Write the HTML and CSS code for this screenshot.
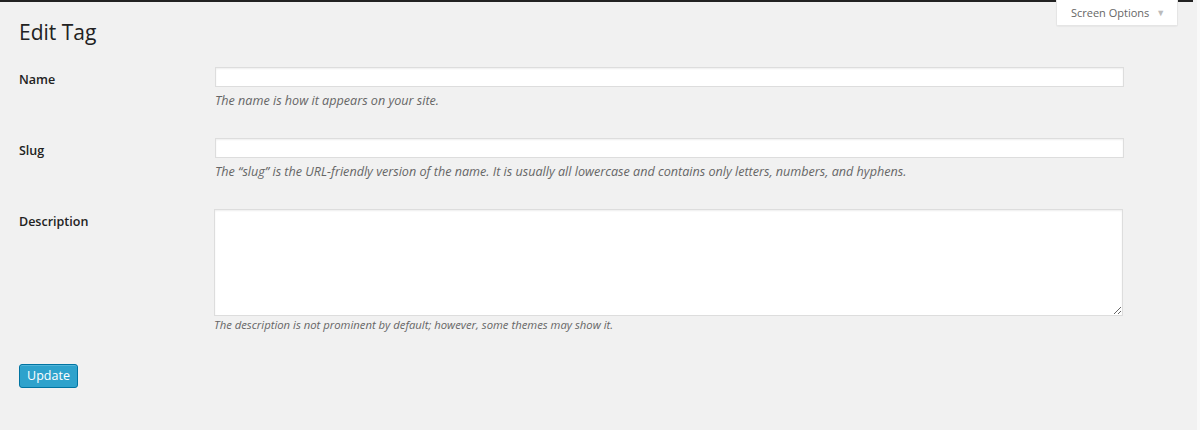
FILE: index.html
```html
<!DOCTYPE html>
<html lang="en">
<head>
<meta charset="utf-8">
<title>Edit Tag</title>
<link rel="stylesheet" href="styles.css">
</head>
<body>
<div class="topbar"></div>
<div class="screen-options">Screen Options <span class="arrow">▼</span></div>
<div class="wrap">
  <h1 class="title">Edit Tag</h1>
  <form class="form">
    <div class="row">
      <label class="label" for="name">Name</label>
      <div class="field">
        <input class="input" id="name" type="text">
        <p class="desc">The name is how it appears on your site.</p>
      </div>
    </div>
    <div class="row">
      <label class="label" for="slug">Slug</label>
      <div class="field">
        <input class="input" id="slug" type="text">
        <p class="desc">The “slug” is the URL-friendly version of the name. It is usually all lowercase and contains only letters, numbers, and hyphens.</p>
      </div>
    </div>
    <div class="row">
      <label class="label" for="description">Description</label>
      <div class="field">
        <textarea class="textarea" id="description"></textarea>
        <p class="desc desc-small">The description is not prominent by default; however, some themes may show it.</p>
      </div>
    </div>
    <div class="actions">
      <button class="button" type="button">Update</button>
    </div>
  </form>
</div>
</body>
</html>
```
FILE: styles.css
```css
html, body {
  margin: 0;
  padding: 0;
}
body {
  background: #f1f1f1;
  font-family: "Open Sans", "Liberation Sans", sans-serif;
  color: #222;
  height: 430px;
  overflow: hidden;
  position: relative;
  border-right: 3px solid #f9f9f9;
  box-sizing: border-box;
}
.topbar {
  height: 2px;
  background: #222;
  margin-right: 4px;
}
.screen-options {
  position: absolute;
  top: 0;
  right: 19px;
  width: 122px;
  height: 26px;
  box-sizing: border-box;
  padding-left: 2px;
  background: #fff;
  border: 1px solid #e5e5e5;
  border-top: none;
  border-radius: 0 0 2px 2px;
  font-size: 11px;
  line-height: 25px;
  color: #666;
  text-align: center;
  box-shadow: 0 1px 1px rgba(0,0,0,0.04);
}
.screen-options .arrow {
  font-size: 9px;
  color: #bbb;
  vertical-align: 1px;
  margin-left: 4px;
}
.wrap {
  padding: 0 0 0 19px;
}
.title {
  margin: 16px 0 0 0;
  font-size: 21px;
  font-weight: 400;
  line-height: 29px;
  color: #222;
}
.form {
  margin-top: 5px;
}
.row {
  display: grid;
  grid-template-columns: 196px 909px;
  padding: 15px 0;
}
.label {
  font-size: 12.5px;
  font-weight: 600;
  line-height: 20px;
  padding-top: 3px;
  color: #222;
}
.field {
  display: flex;
  flex-direction: column;
}
.input {
  display: block;
  width: 909px;
  height: 20px;
  box-sizing: border-box;
  margin: 0;
  padding: 0 4px;
  border: 1px solid #ddd;
  background: #fff;
  box-shadow: inset 0 1px 2px rgba(0,0,0,0.07);
  font-family: inherit;
  font-size: 13px;
}
.textarea {
  display: block;
  width: 909px;
  height: 107px;
  box-sizing: border-box;
  margin: 0 0 0 -1px;
  padding: 2px 4px;
  border: 1px solid #ddd;
  background: #fff;
  box-shadow: inset 0 1px 2px rgba(0,0,0,0.07);
  font-family: inherit;
  font-size: 13px;
}
.desc {
  margin: 4px 0 -3px 0;
  font-size: 12.6px;
  font-style: italic;
  line-height: 20px;
  color: #666;
}
.desc-small {
  font-size: 11.3px;
  margin: -1px 0 2px -1px;
}
.actions {
  padding-top: 12px;
}
.button {
  display: block;
  width: 59px;
  height: 24px;
  box-sizing: border-box;
  padding: 0;
  background: #2ea2cc;
  border: 1px solid #0074a2;
  border-radius: 3px;
  box-shadow: inset 0 1px 0 rgba(120,200,230,0.5);
  color: #fff;
  font-family: inherit;
  font-size: 12.5px;
  line-height: 22px;
  cursor: pointer;
}
```
